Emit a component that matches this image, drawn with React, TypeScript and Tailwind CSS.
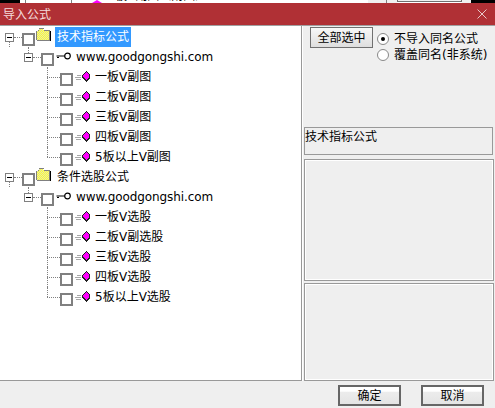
const font = "[font-family:'DejaVu_Sans','Noto_Sans_CJK_SC',sans-serif]";

function Box({ root }: { root?: boolean }) {
  return <span className={`w-[13px] h-[13px] shrink-0 border-2 border-[#808080] bg-white ${root ? "mt-[5px]" : "mt-[4px]"}`} />;
}
function Expander() {
  return (
    <span className="w-[9px] h-[9px] shrink-0 border border-[#808080] bg-white flex items-center justify-center">
      <span className="w-[5px] h-px bg-black" />
    </span>
  );
}
function Folder({ id }: { id: string }) {
  return (
    <svg width="15" height="13" viewBox="0 0 15 13" className="shrink-0 mb-[5px]" shapeRendering="crispEdges">
      <defs>
        <pattern id={id} width="2" height="2" patternUnits="userSpaceOnUse">
          <rect width="2" height="2" fill="#ffff30" />
          <rect width="1" height="1" fill="#e4e4b0" />
          <rect x="1" y="1" width="1" height="1" fill="#e4e4b0" />
        </pattern>
      </defs>
      <path d="M1 12V3H2V2H3V1H7V2H8V3H13V12Z" fill={`url(#${id})`} />
      <path d="M0.5 12V3M2 2.5H2.5M3 0.5H7.5M8 2.5H13.5" stroke="#808080" fill="none" />
      <path d="M14.5 3V13H1" stroke="#000" fill="none" />
      <path d="M13.5 3V12H1" stroke="#808080" fill="none" />
    </svg>
  );
}
function Key() {
  return (
    <svg width="15" height="9" viewBox="0 0 15 9" className="shrink-0 mb-[1px]">
      <path d="M0.5 4H9M1 5.5H3" stroke="#000" strokeWidth="1.2" fill="none" />
      <circle cx="11.5" cy="4" r="2.8" fill="#fff" stroke="#000" strokeWidth="1.2" />
    </svg>
  );
}
function Gem() {
  return (
    <svg width="16" height="12" viewBox="0 0 16 12" className="shrink-0 mb-[1px]" shapeRendering="crispEdges">
      <path d="M2 4.5H6M0 6.5H6M1 8.5H6" stroke="#a8a8a8" fill="none" />
      <path d="M11 0H12V1H13V2H14V3H15V8H14V9H13V10H12V11H11V10H10V9H9V8H8V7H7V4H8V3H9V2H10V1H11Z" fill="#202020" />
      <path d="M11 1H12V2H13V3H14V7H13V8H12V9H11V8H10V7H9V6H8V5V4H9V3H10V2H11Z" fill="#ff00ff" />
    </svg>
  );
}

function Root({ label, selected }: { label: string; selected?: boolean }) {
  return (
    <div className="h-5 relative flex items-center pl-[5px]">
      <span className="absolute left-[9px] top-[15px] h-[5px] border-l border-dotted border-[#808080]" />
      <Expander />
      <span className="w-[8px] shrink-0 border-t border-dotted border-[#808080]" />
      <Box root />
      <span className="w-[1px] shrink-0" />
      <Folder id={selected ? "dither-a" : "dither-b"} />
      <span className={`ml-[4px] h-5 px-[2px] leading-5 text-xs ${selected ? "bg-[#3399ff] text-white" : "text-black"}`}>{label}</span>
    </div>
  );
}
function Site() {
  return (
    <div className="h-5 relative flex items-center pl-[24px]">
      <span className="absolute left-[28px] top-0 h-[6px] border-l border-dotted border-[#808080]" />
      <Expander />
      <span className="w-[8px] shrink-0 border-t border-dotted border-[#808080]" />
      <Box />
      <span className="w-[2px] shrink-0" />
      <Key />
      <span className="ml-[5px] text-xs text-black tracking-[-0.1px]">www.goodgongshi.com</span>
    </div>
  );
}
function Leaf({ label, last }: { label: string; last?: boolean }) {
  return (
    <div className="h-5 relative flex items-center pl-[47px]">
      <span className={`absolute left-[47px] top-0 border-l border-dotted border-[#808080] ${last ? "h-[10px]" : "h-5"}`} />
      <span className="w-[13px] shrink-0 border-t border-dotted border-[#808080]" />
      <Box />
      <span className="w-[2px] shrink-0" />
      <Gem />
      <span className="ml-[4px] text-xs text-black">{label}</span>
    </div>
  );
}

function Group({ title, selected, leaves }: { title: string; selected?: boolean; leaves: string[] }) {
  return (
    <div>
      <Root label={title} selected={selected} />
      <Site />
      {leaves.map((l, i) => (
        <Leaf key={l} label={l} last={i === leaves.length - 1} />
      ))}
    </div>
  );
}

function DlgButton({ children }: { children: string }) {
  return (
    <button className="w-[63px] h-[21px] border-2 border-[#666666] text-xs text-black bg-[linear-gradient(#ffffff_0%,#ffffff_25%,#ececec_30%,#e4e4e4_100%)]">
      {children}
    </button>
  );
}

function Radio({ on, label }: { on?: boolean; label: string }) {
  return (
    <div className="flex items-center h-[16px]">
      <span className="w-[12px] h-[12px] rounded-full border border-[#888888] bg-white flex items-center justify-center shrink-0">
        {on && <span className="w-[4px] h-[4px] rounded-full bg-black" />}
      </span>
      <span className="ml-[5px] text-xs text-black whitespace-nowrap">{label}</span>
    </div>
  );
}

function BehindStrip() {
  return (
    <div className="h-[3px] shrink-0 flex overflow-hidden bg-white">
      <div className="w-[20px] bg-black shrink-0" />
      <div className="w-[5px] shrink-0" />
      <div className="w-px bg-[#808080] shrink-0" />
      <div className="w-[45px] shrink-0" />
      <div className="w-px bg-[#808080] shrink-0" />
      <div className="w-[20px] shrink-0" />
      <div className="w-0 h-0 mt-0 shrink-0 border-x-[5px] border-x-transparent border-b-[3px] border-b-[#ff00ff]" />
      <div className="w-[1px] shrink-0" />
      <div className="w-[265px] shrink-0 flex items-end h-[3px]">
        <span className="text-xs text-black whitespace-nowrap leading-[14px] shrink-0">二板V副图（附图）</span>
      </div>
      <div className="w-[18px] bg-[#f0f0f0] shrink-0" />
      <div className="w-px bg-[#808080] shrink-0" />
      <div className="w-[10px] bg-[#f0f0f0] shrink-0" />
      <div className="w-[65px] h-[2px] border-x border-b border-[#707070] bg-[#f0f0f0] shrink-0" />
      <div className="w-[9px] bg-[#f0f0f0] shrink-0" />
      <div className="flex-1 bg-black" />
    </div>
  );
}

export default function App() {
  return (
    <div className={`w-[495px] h-[408px] overflow-hidden flex flex-col bg-[#efefef] ${font}`}>
      <BehindStrip />
      <div className="h-[22px] shrink-0 bg-[#b03035] flex items-center justify-between pl-[3px] pr-[8px]">
        <span className="text-xs text-[#f4dcdc] pt-[1px]">导入公式</span>
        <svg width="10" height="10" viewBox="0 0 10 10"><path d="M0.5 0.5L9.5 9.5M9.5 0.5L0.5 9.5" stroke="#e8c8c8" fill="none" /></svg>
      </div>
      <div className="h-px shrink-0 bg-[#a0a0a0]" />
      <div className="flex h-[355px] shrink-0">
        <div className="w-[302px] shrink-0 bg-white border-r border-b border-[#999999] pt-px">
          <Group title="技术指标公式" selected leaves={["一板V副图", "二板V副图", "三板V副图", "四板V副图", "5板以上V副图"]} />
          <Group title="条件选股公式" leaves={["一板V选股", "二板V副选股", "三板V选股", "四板V选股", "5板以上V选股"]} />
        </div>
        <div className="w-[1px] shrink-0 bg-white" />
        <div className="flex-1 flex flex-col pl-[1px] pr-[1px]">
          <div className="h-[101px] shrink-0 flex pt-[1px] pl-[6px]">
            <button className="w-[63px] h-[21px] border border-[#707070] text-xs text-black bg-[linear-gradient(#f8f8f8,#dedede)]">全部选中</button>
            <div className="ml-[4px] pt-[4px]">
              <Radio on label="不导入同名公式" />
              <Radio label="覆盖同名(非系统)" />
            </div>
          </div>
          <div className="h-[28px] mr-[1px] shrink-0 border border-[#999999] text-xs text-black leading-[18px]">技术指标公式</div>
          <div className="h-[122px] mt-[4px] shrink-0 border border-[#999999] shadow-[inset_0_0_0_1px_#ffffff]" />
          <div className="h-[98px] mt-[2px] shrink-0 border border-[#999999] shadow-[inset_0_0_0_1px_#ffffff]" />
        </div>
      </div>
      <div className="flex-1 flex justify-end items-start pt-[4px] pr-[11px] gap-[20px]">
        <DlgButton>确定</DlgButton>
        <DlgButton>取消</DlgButton>
      </div>
    </div>
  );
}
